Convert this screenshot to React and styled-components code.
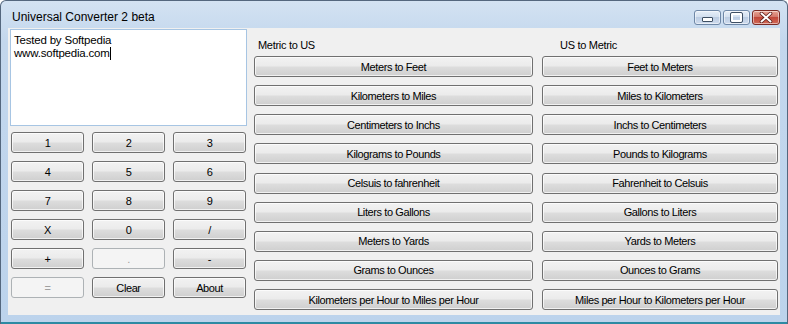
import styled, { createGlobalStyle } from "styled-components";

const GlobalStyle = createGlobalStyle`
  html, body {
    margin: 0;
    padding: 0;
    background: #ffffff;
  }
`;

const metricToUs = [
  "Meters to Feet",
  "Kilometers to Miles",
  "Centimeters to Inchs",
  "Kilograms to Pounds",
  "Celsuis to fahrenheit",
  "Liters to Gallons",
  "Meters to Yards",
  "Grams to Ounces",
  "Kilometers per Hour to Miles per Hour",
];

const usToMetric = [
  "Feet to Meters",
  "Miles to Kilometers",
  "Inchs to Centimeters",
  "Pounds to Kilograms",
  "Fahrenheit to Celsuis",
  "Gallons to Liters",
  "Yards to Meters",
  "Ounces to Grams",
  "Miles per Hour to Kilometers per Hour",
];

const keys = [
  { label: "1" },
  { label: "2" },
  { label: "3" },
  { label: "4" },
  { label: "5" },
  { label: "6" },
  { label: "7" },
  { label: "8" },
  { label: "9" },
  { label: "X" },
  { label: "0" },
  { label: "/" },
  { label: "+" },
  { label: ".", disabled: true },
  { label: "-" },
  { label: "=", disabled: true },
  { label: "Clear" },
  { label: "About" },
];

function App() {
  return (
    <>
      <GlobalStyle />
      <Window>
        <TitleBar>
          <Title>Universal Converter 2 beta</Title>
          <Caption>
            <CaptionButton>
              <MinGlyph />
            </CaptionButton>
            <CaptionButton>
              <MaxGlyph />
            </CaptionButton>
            <CaptionButton close>
              <svg width="14" height="11" viewBox="0 0 14 11">
                <path
                  d="M2.5 1.5 L11.5 9.5 M11.5 1.5 L2.5 9.5"
                  stroke="#5a1a16"
                  strokeWidth="3.6"
                  strokeLinecap="round"
                />
                <path
                  d="M2.5 1.5 L11.5 9.5 M11.5 1.5 L2.5 9.5"
                  stroke="#ffffff"
                  strokeWidth="2"
                  strokeLinecap="round"
                />
              </svg>
            </CaptionButton>
          </Caption>
        </TitleBar>
        <Client>
          <LeftPanel>
            <TextBox>
              <div>Tested by Softpedia</div>
              <div>
                www.softpedia.com
                <Caret />
              </div>
            </TextBox>
            <Keypad>
              {keys.map((k) => (
                <Button key={k.label} disabled={k.disabled}>
                  {k.label}
                </Button>
              ))}
            </Keypad>
          </LeftPanel>
          <Column width="279px" gap="7px">
            <GroupLabel inset="4px">Metric to US</GroupLabel>
            <ButtonStack>
              {metricToUs.map((t) => (
                <Button key={t}>{t}</Button>
              ))}
            </ButtonStack>
          </Column>
          <Column width="236px" gap="9px">
            <GroupLabel inset="18px">US to Metric</GroupLabel>
            <ButtonStack>
              {usToMetric.map((t) => (
                <Button key={t}>{t}</Button>
              ))}
            </ButtonStack>
          </Column>
        </Client>
        <BottomEdge />
      </Window>
    </>
  );
}

const Window = styled.div`
  width: 788px;
  height: 324px;
  box-sizing: border-box;
  display: flex;
  flex-direction: column;
  background: linear-gradient(180deg, #d3e2f2 0px, #c3d7ed 40px, #bcd3ec 100%);
  border: 1px solid #54677e;
  border-bottom: none;
  border-radius: 6px 6px 0 0;
  padding: 0 7px 0 7px;
  font-family: "Liberation Sans", Arial, sans-serif;
`;

const TitleBar = styled.div`
  height: 27px;
  display: flex;
  align-items: flex-start;
  justify-content: space-between;
`;

const Title = styled.div`
  font-family: "Liberation Sans", Arial, sans-serif;
  font-size: 12px;
  color: #000000;
  padding: 9px 0 0 4px;
`;

const Caption = styled.div`
  display: flex;
  gap: 2px;
  padding-top: 9px;
`;

const CaptionButton = styled.div`
  width: ${({ close }) => (close ? "28px" : "27px")};
  height: 15px;
  box-sizing: border-box;
  border: 1px solid ${({ close }) => (close ? "#7a2a24" : "#6e87a6")};
  border-radius: 3px;
  display: flex;
  align-items: center;
  justify-content: center;
  background: ${({ close }) =>
    close
      ? "linear-gradient(180deg, #e8a493 0%, #d2776a 45%, #c2483a 50%, #d06a58 100%)"
      : "linear-gradient(180deg, #e6eef8 0%, #d3e0ef 45%, #bccde3 50%, #cfdcee 100%)"};
  box-shadow: inset 0 0 0 1px rgba(255, 255, 255, 0.5);
`;

const MinGlyph = styled.div`
  width: 9px;
  height: 3px;
  margin-top: 4px;
  background: #ffffff;
  border: 1px solid #3e4f63;
  border-radius: 1px;
`;

const MaxGlyph = styled.div`
  width: 7px;
  height: 5px;
  background: transparent;
  border: 2px solid #ffffff;
  outline: 1px solid #3e4f63;
  border-radius: 1px;
`;

const Client = styled.div`
  height: 287px;
  background: #f0f0f0;
  display: flex;
  padding: 1px 0 0 2px;
  box-sizing: border-box;
`;

const LeftPanel = styled.div`
  width: 237px;
  display: flex;
  flex-direction: column;
`;

const TextBox = styled.div`
  height: 97px;
  box-sizing: border-box;
  background: #ffffff;
  border: 1px solid #a7c5e3;
  padding: 4px 3px;
  font-size: 11.5px;
  line-height: 13px;
  letter-spacing: -0.2px;
  color: #000000;
`;

const Caret = styled.span`
  display: inline-block;
  width: 1px;
  height: 13px;
  background: #000000;
  vertical-align: top;
`;

const Keypad = styled.div`
  margin-top: 6px;
  padding-left: 1px;
  display: grid;
  grid-template-columns: repeat(3, 73px);
  grid-auto-rows: 21px;
  column-gap: 8px;
  row-gap: 8px;
`;

const Column = styled.div`
  width: ${({ width }) => width};
  margin-left: ${({ gap }) => gap};
  display: flex;
  flex-direction: column;
`;

const GroupLabel = styled.div`
  height: 27px;
  box-sizing: border-box;
  padding: 10px 0 0 ${({ inset }) => inset};
  font-size: 11px;
  letter-spacing: -0.3px;
  color: #000000;
`;

const ButtonStack = styled.div`
  height: 254px;
  display: flex;
  flex-direction: column;
  justify-content: space-between;
`;

const Button = styled.button`
  height: 21px;
  box-sizing: border-box;
  margin: 0;
  padding: 0 4px;
  border: 1px solid ${({ disabled }) => (disabled ? "#adb2b5" : "#707070")};
  border-radius: 3px;
  font-family: "Liberation Sans", Arial, sans-serif;
  font-size: 11px;
  letter-spacing: -0.4px;
  color: ${({ disabled }) => (disabled ? "#a0a0a0" : "#000000")};
  white-space: nowrap;
  background: ${({ disabled }) =>
    disabled
      ? "#f4f4f4"
      : "linear-gradient(180deg, #f2f2f2 0%, #ebebeb 48%, #dddddd 52%, #cfcfcf 100%)"};
  box-shadow: ${({ disabled }) =>
    disabled ? "none" : "inset 0 0 0 1px rgba(255, 255, 255, 0.7)"};
`;

const BottomEdge = styled.div`
  flex: 1;
  border-bottom: 2px solid #2d8aa3;
  margin: 0 -7px;
`;

export default App;
